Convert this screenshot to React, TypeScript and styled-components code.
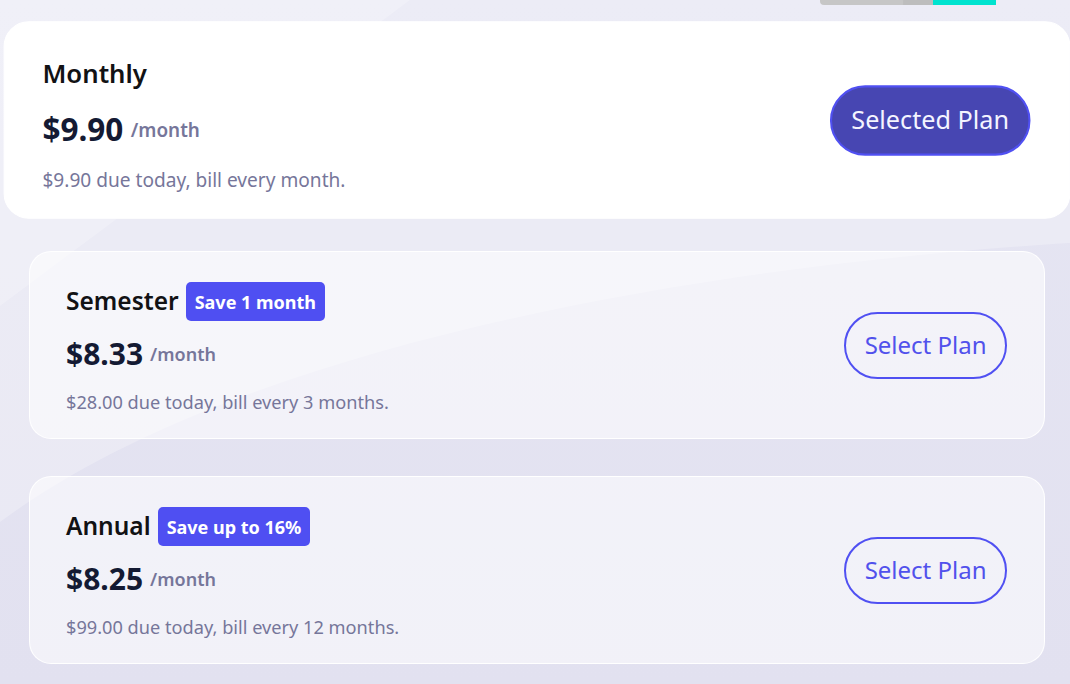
import React from "react";
import styled, { createGlobalStyle } from "styled-components";

const GlobalStyle = createGlobalStyle`
  html, body { margin: 0; padding: 0; }
  body {
    font-family: "Noto Sans", "Open Sans", sans-serif;
    background: #e3e2f1;
  }
  * { box-sizing: border-box; }
`;

const Page = styled.div`
  position: relative;
  width: 100%;
  min-height: 684px;
  overflow: hidden;
  background: linear-gradient(180deg, #e6e6f3 0%, #e2e1f0 100%);
`;

const Backdrop = styled.svg`
  position: absolute;
  inset: 0;
  width: 100%;
  height: 100%;
  z-index: 0;
  pointer-events: none;
`;

const Content = styled.div`
  position: relative;
  z-index: 1;
  display: flex;
  flex-direction: column;
`;

const TopStrip = styled.div`
  display: flex;
  justify-content: flex-end;
  padding-right: 74px;
  height: 5px;
`;

const Progress = styled.div`
  display: flex;
  width: 176px;
  height: 5px;
`;

const ProgressTrack = styled.div`
  width: 113px;
  height: 5px;
  border-radius: 0 0 0 4px;
  background: linear-gradient(90deg, #c6c6c6 0%, #c6c6c6 73%, #bdbdbd 74%, #bdbdbd 100%);
`;

const ProgressFill = styled.div`
  flex: 1;
  height: 5px;
  background: #00e3cf;
`;

const List = styled.div`
  display: flex;
  flex-direction: column;
  gap: 37px;
  padding: 21px 25px 20px 29px;
`;

const Card = styled.div<{ $selected?: boolean }>`
  display: flex;
  align-items: center;
  justify-content: space-between;
  height: 188px;
  padding: 0 37px 0 36px;
  border-radius: ${(p) => (p.$selected ? "24px" : "22px")};
  background: ${(p) => (p.$selected ? "#ffffff" : "rgba(255, 255, 255, 0.55)")};
  border: 1px solid ${(p) => (p.$selected ? "#ffffff" : "rgba(255, 255, 255, 0.95)")};
  transform: ${(p) => (p.$selected ? "scale(1.05)" : "none")};
  transform-origin: center center;
`;

const Info = styled.div`
  display: flex;
  flex-direction: column;
  margin-top: 6px;
`;

const TitleRow = styled.div`
  display: flex;
  align-items: center;
  gap: 7px;
  height: 39px;
`;

const Title = styled.span`
  font-size: 24.5px;
  font-weight: 600;
  line-height: 1;
  color: #121214;
`;

const Badge = styled.span`
  display: inline-flex;
  align-items: center;
  height: 39px;
  padding: 0 9px;
  border-radius: 5px;
  background: #4f4ff2;
  color: #ffffff;
  font-size: 18px;
  font-weight: 700;
  line-height: 1;
`;

const PriceRow = styled.div`
  display: flex;
  align-items: center;
  gap: 7px;
  margin-top: 13px;
  height: 40px;
`;

const Price = styled.span`
  font-size: 30px;
  font-weight: 700;
  line-height: 1;
  color: #141a33;
`;

const Per = styled.span`
  font-size: 18px;
  font-weight: 600;
  line-height: 1;
  color: #76769a;
`;

const Desc = styled.div`
  margin-top: 16px;
  font-size: 18.2px;
  line-height: 24px;
  color: #76769a;
`;

const PlanButton = styled.button<{ $selected?: boolean }>`
  height: 67px;
  padding: 0 18.5px;
  border-radius: 34px;
  border: 2.5px solid #5050f2;
  background: ${(p) => (p.$selected ? "#4746b2" : "transparent")};
  color: ${(p) => (p.$selected ? "#f4f4ff" : "#5151ec")};
  font-family: "Noto Sans", "Open Sans", sans-serif;
  font-size: 24px;
  font-weight: 400;
  line-height: 1;
  cursor: pointer;
  white-space: nowrap;
`;

type Plan = {
  name: string;
  badge?: string;
  price: string;
  desc: string;
  selected?: boolean;
};

const plans: Plan[] = [
  { name: "Monthly", price: "$9.90", desc: "$9.90 due today, bill every month.", selected: true },
  { name: "Semester", badge: "Save 1 month", price: "$8.33", desc: "$28.00 due today, bill every 3 months." },
  { name: "Annual", badge: "Save up to 16%", price: "$8.25", desc: "$99.00 due today, bill every 12 months." },
];

export default function App() {
  return (
    <>
      <GlobalStyle />
      <Page>
        <Backdrop viewBox="0 0 1070 684" preserveAspectRatio="none">
          <path d="M0 0 L1070 0 L1070 243 C 760 262, 260 330, 0 522 Z" fill="#ffffff" fillOpacity="0.25" />
          <path d="M0 0 L410 0 L0 306 Z" fill="#ffffff" fillOpacity="0.22" />
        </Backdrop>
        <Content>
          <TopStrip>
            <Progress>
              <ProgressTrack />
              <ProgressFill />
            </Progress>
          </TopStrip>
          <List>
            {plans.map((p) => (
              <Card key={p.name} $selected={p.selected}>
                <Info>
                  <TitleRow>
                    <Title>{p.name}</Title>
                    {p.badge && <Badge>{p.badge}</Badge>}
                  </TitleRow>
                  <PriceRow>
                    <Price>{p.price}</Price>
                    <Per>/month</Per>
                  </PriceRow>
                  <Desc>{p.desc}</Desc>
                </Info>
                <PlanButton $selected={p.selected}>
                  {p.selected ? "Selected Plan" : "Select Plan"}
                </PlanButton>
              </Card>
            ))}
          </List>
        </Content>
      </Page>
    </>
  );
}
